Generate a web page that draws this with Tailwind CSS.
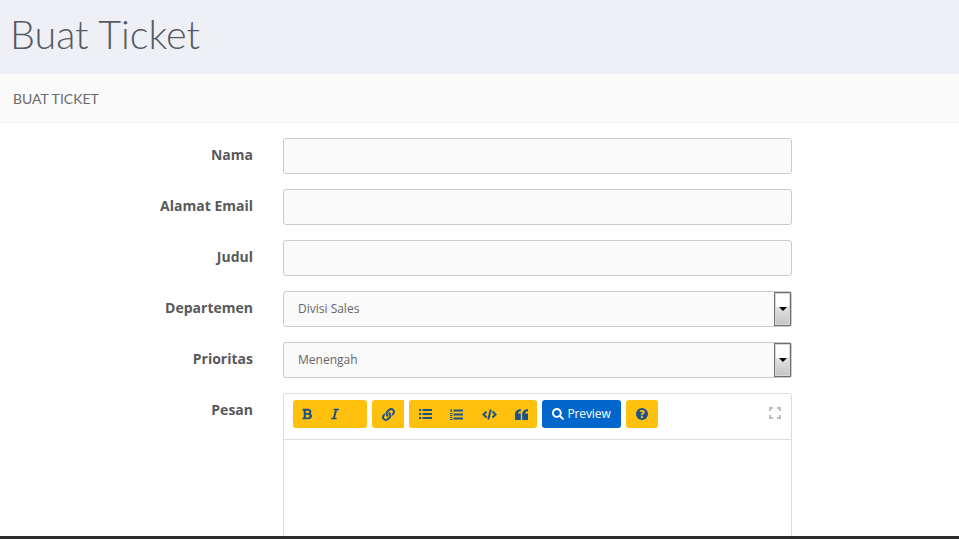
<!doctype html>
<html lang="en">
<head>
<meta charset="UTF-8" />
<title>Buat Ticket</title>
<script src="https://cdn.jsdelivr.net/npm/@tailwindcss/browser@4"></script>
</head>
<body class="h-[539px] overflow-hidden bg-white font-['Open_Sans',sans-serif] text-[#58595b]">
<div class="flex h-[539px] flex-col">
  <div class="h-[74px] shrink-0 bg-[#eff0f6] pl-[10px] pt-[7px]">
    <h1 class="font-['Lato',sans-serif] text-[39.5px] leading-[53px] font-light text-[#555a62]">Buat Ticket</h1>
  </div>
  <div class="h-[49px] shrink-0 border-b border-[#f0f0f0] bg-[#fafafa] pl-[13px] pt-px font-['Lato',sans-serif] text-[14px] leading-[48px] text-[#6b6b6b]">BUAT TICKET</div>

  <form class="flex min-h-0 flex-1 flex-col gap-[15px] overflow-hidden pt-[15px]">
    <div class="flex h-[36px] shrink-0">
      <label class="w-[253px] pt-[7px] text-right text-[14px] leading-[20px] font-bold">Nama</label>
      <input class="ml-[30px] h-[36px] w-[509px] rounded-[3px] border border-[#cccccc] bg-[#fafafa]" />
    </div>
    <div class="flex h-[36px] shrink-0">
      <label class="w-[253px] pt-[7px] text-right text-[14px] leading-[20px] font-bold">Alamat Email</label>
      <input class="ml-[30px] h-[36px] w-[509px] rounded-[3px] border border-[#cccccc] bg-[#fafafa]" />
    </div>
    <div class="flex h-[36px] shrink-0">
      <label class="w-[253px] pt-[7px] text-right text-[14px] leading-[20px] font-bold">Judul</label>
      <input class="ml-[30px] h-[36px] w-[509px] rounded-[3px] border border-[#cccccc] bg-[#fafafa]" />
    </div>
    <div class="flex h-[36px] shrink-0">
      <label class="w-[253px] pt-[7px] text-right text-[14px] leading-[20px] font-bold">Departemen</label>
      <div class="relative ml-[30px] h-[36px] w-[509px] rounded-[3px] border border-[#cccccc] bg-[#fafafa] pl-[14px] text-[12px] leading-[34px] text-[#666]">
        Divisi Sales
        <div class="absolute top-0 right-0 flex h-[34px] w-[17px] items-center justify-center border border-[#6e6e6e] bg-gradient-to-b from-[#ffffff] from-45% via-[#e2e2e2] via-45% to-[#c4c4c4] shadow-[inset_0_0_0_1px_#d8d8d8]">
          <span class="border-x-[4px] border-t-[4px] border-x-transparent border-t-black"></span>
        </div>
      </div>
    </div>
    <div class="flex h-[36px] shrink-0">
      <label class="w-[253px] pt-[7px] text-right text-[14px] leading-[20px] font-bold">Prioritas</label>
      <div class="relative ml-[30px] h-[36px] w-[509px] rounded-[3px] border border-[#cccccc] bg-[#fafafa] pl-[14px] text-[12px] leading-[34px] text-[#666]">
        Menengah
        <div class="absolute top-0 right-0 flex h-[34px] w-[17px] items-center justify-center border border-[#6e6e6e] bg-gradient-to-b from-[#ffffff] from-45% via-[#e2e2e2] via-45% to-[#c4c4c4] shadow-[inset_0_0_0_1px_#d8d8d8]">
          <span class="border-x-[4px] border-t-[4px] border-x-transparent border-t-black"></span>
        </div>
      </div>
    </div>
    <div class="flex shrink-0">
      <label class="w-[253px] pt-[7px] text-right text-[14px] leading-[20px] font-bold">Pesan</label>
      <div class="ml-[30px] h-[200px] w-[509px] rounded-t-[3px] border border-[#dddddd]">
        <div class="flex h-[46px] items-start gap-[5px] border-b border-[#dddddd] pl-[9px] pt-[6px]">
          <div class="flex h-[28px] w-[74px] items-center rounded-[3px] bg-[#ffc10e] pl-[9px] text-[#1d5289]">
            <svg class="h-[12px] w-[10px]" viewBox="0 0 384 512" fill="currentColor" preserveAspectRatio="none"><path d="M333.49 238a122 122 0 0 0 27-65.21C367.87 96.49 308 32 233.42 32H34a16 16 0 0 0-16 16v48a16 16 0 0 0 16 16h31.87v288H34a16 16 0 0 0-16 16v48a16 16 0 0 0 16 16h209.32c70.8 0 134.14-51.75 141-122.4 4.74-48.45-16.39-92.06-50.83-119.6zM145.66 112h87.76a48 48 0 0 1 0 96h-87.76zm87.76 288h-87.76V288h87.76a56 56 0 0 1 0 112z"/></svg>
            <svg class="ml-[19px] h-[12px] w-[8px]" viewBox="0 0 320 512" fill="currentColor" preserveAspectRatio="none"><path d="M320 48v32a16 16 0 0 1-16 16h-62.76l-80 320H208a16 16 0 0 1 16 16v32a16 16 0 0 1-16 16H16a16 16 0 0 1-16-16v-32a16 16 0 0 1 16-16h62.76l80-320H112a16 16 0 0 1-16-16V48a16 16 0 0 1 16-16h192a16 16 0 0 1 16 16z"/></svg>
          </div>
          <div class="flex h-[28px] w-[32px] items-center justify-center rounded-l-[3px] bg-[#ffc10e] text-[#1d5289]">
            <svg class="h-[13px] w-[13px]" viewBox="0 0 512 512" fill="currentColor"><path d="M326.612 185.391c59.747 59.809 58.927 155.698.36 214.59-.11.12-.24.25-.36.37l-67.2 67.2c-59.27 59.27-155.699 59.262-214.96 0-59.27-59.26-59.27-155.7 0-214.96l37.106-37.106c9.84-9.84 26.786-3.3 27.294 10.606.648 17.722 3.826 35.527 9.69 52.721 1.986 5.822.567 12.262-3.783 16.612l-13.087 13.087c-28.026 28.026-28.905 73.66-1.155 101.96 28.024 28.579 74.086 28.749 102.325.51l67.2-67.19c28.191-28.191 28.073-73.757 0-101.83-3.701-3.694-7.429-6.564-10.341-8.569a16.037 16.037 0 0 1-6.947-12.606c-.396-10.567 3.348-21.456 11.698-29.806l21.054-21.055c5.521-5.521 14.182-6.199 20.584-1.731a152.482 152.482 0 0 1 20.522 17.197zM467.547 44.449c-59.261-59.262-155.69-59.27-214.96 0l-67.2 67.2c-.12.12-.25.25-.36.37-58.566 58.892-59.387 154.781.36 214.59a152.454 152.454 0 0 0 20.521 17.196c6.402 4.468 15.064 3.789 20.584-1.731l21.054-21.055c8.35-8.35 12.094-19.239 11.698-29.806a16.037 16.037 0 0 0-6.947-12.606c-2.912-2.005-6.64-4.875-10.341-8.569-28.073-28.073-28.191-73.639 0-101.83l67.2-67.19c28.239-28.239 74.3-28.069 102.325.51 27.75 28.3 26.872 73.934-1.155 101.96l-13.087 13.087c-4.35 4.35-5.769 10.79-3.783 16.612 5.864 17.194 9.042 34.999 9.69 52.721.509 13.906 17.454 20.446 27.294 10.606l37.106-37.106c59.271-59.259 59.271-155.699.001-214.959z"/></svg>
          </div>
          <div class="flex h-[28px] w-[128px] items-center rounded-[3px] bg-[#ffc10e] pl-[10px] text-[#1d5289]">
            <svg class="h-[10px] w-[13px]" viewBox="0 0 13 10" fill="currentColor"><rect x="0" y="0" width="2.200" height="2"/><rect x="0" y="4" width="2.200" height="2"/><rect x="0" y="8" width="2.200" height="2"/><rect x="3.500" y="0" width="9.500" height="2"/><rect x="3.500" y="4" width="9.500" height="2"/><rect x="3.500" y="8" width="9.500" height="2"/></svg>
            <svg class="ml-[18px] h-[11px] w-[13px]" viewBox="0 0 13 11" fill="currentColor"><rect x="0.500" y="0" width="1.200" height="3"/><rect x="0" y="4" width="2.500" height="1"/><rect x="0" y="6" width="2.500" height="1"/><rect x="0" y="8" width="2.500" height="1"/><rect x="0" y="10" width="2.500" height="1"/><rect x="3.500" y=".5" width="9.500" height="2"/><rect x="3.500" y="4.500" width="9.500" height="2"/><rect x="3.500" y="8.500" width="9.500" height="2"/></svg>
            <svg class="ml-[19px] h-[11px] w-[15px]" viewBox="0 0 15 11" fill="none" stroke="currentColor" stroke-width="2"><path d="M4.500 2.500 1.500 5.500l3 3M10.500 2.500l3 3-3 3M8.800 .5 6.200 10.500"/></svg>
            <svg class="ml-[18px] h-[11px] w-[13px]" viewBox="0 0 13 11" fill="currentColor"><path d="M0 6C0 2.500 1.500.7 5.800 0v2.200C3.800 2.600 3 3.300 3 4.400h2.800V11H0zM7.200 6c0-3.500 1.500-5.300 5.800-6v2.200c-2 .4-2.800 1.100-2.800 2.200H13V11H7.200z"/></svg>
          </div>
          <div class="flex h-[28px] w-[79px] items-center justify-center gap-[3px] rounded-[3px] bg-[#0066cc] text-[12px] font-medium tracking-[-0.1px] text-white">
            <svg class="h-[12px] w-[12px]" viewBox="0 0 512 512" fill="currentColor"><path d="M505 442.7L405.3 343c-4.5-4.5-10.6-7-17-7H372c27.6-35.3 44-79.7 44-128C416 93.1 322.9 0 208 0S0 93.1 0 208s93.1 208 208 208c48.3 0 92.7-16.4 128-44v16.3c0 6.4 2.5 12.500 7 17l99.7 99.7c9.4 9.4 24.6 9.4 33.9 0l28.3-28.3c9.4-9.4 9.4-24.6.1-34zM208 336c-70.7 0-128-57.2-128-128 0-70.7 57.2-128 128-128 70.7 0 128 57.2 128 128 0 70.7-57.2 128-128 128z"/></svg>
            Preview
          </div>
          <div class="flex h-[28px] w-[32px] items-center justify-center rounded-[3px] bg-[#ffc10e]">
            <span class="flex h-[12px] w-[12px] items-center justify-center rounded-full bg-[#1d5289] text-[10px] leading-none font-extrabold text-[#ffc10e]">?</span>
          </div>
          <svg class="ml-auto mr-[10px] mt-[7px] h-[12px] w-[12px]" viewBox="0 0 12 12" fill="none" stroke="#bdbdbd" stroke-width="2"><path d="M1 4V1H4M8 1h3V4M11 8v3H8M4 11H1V8"/></svg>
        </div>
      </div>
    </div>
  </form>
  <div class="h-[3px] shrink-0 bg-[#2b2b2b]"></div>
</div>
</body>
</html>
